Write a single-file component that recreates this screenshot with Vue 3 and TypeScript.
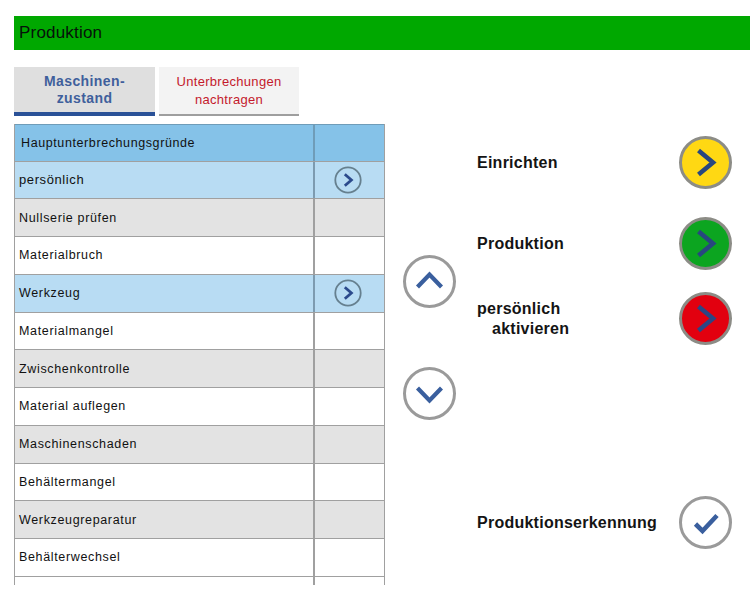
<script setup lang="ts">
interface Row { label: string; tone: 'blue' | 'grey' | 'white'; go?: boolean; big?: boolean }
const rows: Row[] = [
  { label: 'persönlich', tone: 'blue', go: true, big: true },
  { label: 'Nullserie prüfen', tone: 'grey' },
  { label: 'Materialbruch', tone: 'white' },
  { label: 'Werkzeug', tone: 'blue', go: true },
  { label: 'Materialmangel', tone: 'white' },
  { label: 'Zwischenkontrolle', tone: 'grey' },
  { label: 'Material auflegen', tone: 'white' },
  { label: 'Maschinenschaden', tone: 'grey' },
  { label: 'Behältermangel', tone: 'white' },
  { label: 'Werkzeugreparatur', tone: 'grey' },
  { label: 'Behälterwechsel', tone: 'white' },
  { label: '', tone: 'white' },
]
const actions = [
  { label: 'Einrichten', cls: 'yellow', row: 'a1' },
  { label: 'Produktion', cls: 'green', row: 'a2' },
]
</script>

<template>
  <div class="page">
    <header class="bar">Produktion</header>
    <nav class="tabs">
      <div class="tab active">Maschinen-<br />zustand</div>
      <div class="tab other">Unterbrechungen<br />nachtragen</div>
    </nav>
    <main class="main">
      <section class="table">
        <div class="row head">
          <div class="name head-name">Hauptunterbrechungsgründe</div>
          <div class="cell"></div>
        </div>
        <div v-for="(r, i) in rows" :key="i" class="row" :class="r.tone">
          <div class="name" :class="{ big: r.big }">{{ r.label }}</div>
          <div class="cell">
            <svg v-if="r.go" class="mini" viewBox="0 0 28 28">
              <circle cx="14" cy="14" r="12.7" fill="none" stroke="#66808f" stroke-width="1.8" />
              <path d="M10.8 8.2 L17.4 14 L10.8 19.8" fill="none" stroke="#2b4a8c" stroke-width="2.8" />
            </svg>
          </div>
        </div>
      </section>

      <section class="scroll">
        <svg class="round" viewBox="0 0 53 53">
          <circle cx="26.5" cy="26.5" r="25" fill="#fff" stroke="#9a9a9a" stroke-width="3" />
          <path d="M14.5 32 L26.5 19.5 L38.5 32" fill="none" stroke="#3a5f9e" stroke-width="4.2" />
        </svg>
        <svg class="round" viewBox="0 0 53 53">
          <circle cx="26.5" cy="26.5" r="25" fill="#fff" stroke="#9a9a9a" stroke-width="3" />
          <path d="M14.5 21 L26.5 33.5 L38.5 21" fill="none" stroke="#3a5f9e" stroke-width="4.2" />
        </svg>
      </section>

      <section class="actions">
        <div v-for="a in actions" :key="a.label" class="action" :class="a.row">
          <span class="label">{{ a.label }}</span>
          <svg class="round" viewBox="0 0 53 53">
            <circle cx="26.5" cy="26.5" r="25" :class="a.cls" stroke="#8c8c86" stroke-width="3" />
            <path d="M19.5 14.5 L34 26.5 L19.5 38.5" fill="none" stroke="#28477f" stroke-width="4.6" />
          </svg>
        </div>
        <div class="action a3">
          <span class="label">persönlich<br /><span class="indent">aktivieren</span></span>
          <svg class="round" viewBox="0 0 53 53">
            <circle cx="26.5" cy="26.5" r="25" class="red" stroke="#8c8c86" stroke-width="3" />
            <path d="M19.5 14.5 L34 26.5 L19.5 38.5" fill="none" stroke="#2c4684" stroke-width="4.6" />
          </svg>
        </div>
        <div class="action a4">
          <span class="label">Produktionserkennung</span>
          <svg class="round" viewBox="0 0 53 53">
            <circle cx="26.5" cy="26.5" r="25" fill="#fff" stroke="#9a9a9a" stroke-width="3" />
            <path d="M16.5 28 L23.5 35 L38 19.5" fill="none" stroke="#3a5f9e" stroke-width="4.6" />
          </svg>
        </div>
      </section>
    </main>
  </div>
</template>

<style>
html, body { margin: 0; background: #fff; }
</style>

<style scoped>
.page {
  width: 750px;
  height: 600px;
  overflow: hidden;
  box-sizing: border-box;
  padding: 16px 0 0 14px;
  font-family: "Liberation Sans", Arial, sans-serif;
  color: #111;
}
.bar {
  height: 34px;
  line-height: 34px;
  padding-left: 5px;
  background: #00a800;
  font-size: 17px;
  letter-spacing: 0.2px;
  color: #06120a;
}
.tabs {
  display: flex;
  gap: 4px;
  margin-top: 17px;
}
.tab {
  box-sizing: border-box;
  height: 49px;
  text-align: center;
}
.active {
  width: 141px;
  padding-top: 6px;
  background: #dfdfdf;
  border-bottom: 4px solid #2a5197;
  font-size: 14px;
  font-weight: 700;
  line-height: 17px;
  letter-spacing: 0.4px;
  color: #3f5f9c;
}
.other {
  width: 140px;
  padding-top: 6px;
  background: #f3f3f3;
  border-bottom: 2px solid #9e9e9e;
  font-size: 13px;
  line-height: 18px;
  letter-spacing: 0.3px;
  color: #c4192c;
}
.main {
  display: flex;
  margin-top: 8px;
}
.table {
  width: 371px;
  height: 461px;
  overflow: hidden;
  flex: none;
  box-sizing: border-box;
  border-left: 1px solid #a0a0a0;
  border-right: 1px solid #a0a0a0;
}
.row {
  display: grid;
  grid-template-columns: 298px 1fr;
  height: 37.75px;
  box-sizing: border-box;
  border-top: 1px solid #a0a0a0;
}
.head {
  height: 36.5px;
  background: #85c2e8;
  border-top-color: #6f9cb8;
}
.blue { background: #b8dcf3; }
.grey { background: #e3e3e3; }
.white { background: #fff; }
.name {
  display: flex;
  align-items: center;
  padding-left: 4px;
  font-size: 12.5px;
  letter-spacing: 0.65px;
  white-space: nowrap;
}
.big { font-size: 13px; letter-spacing: 0.6px; }
.head-name { padding-left: 6px; letter-spacing: 0.6px; }
.cell {
  display: flex;
  align-items: center;
  justify-content: center;
  padding-right: 3px;
  border-left: 2px solid #a0a0a0;
}
.head .cell { border-left-color: #6f9cb8; }
.blue .cell { border-left-color: #7d9bb0; }
.mini { width: 28px; height: 28px; display: block; }
.scroll {
  width: 53px;
  margin-left: 18px;
  flex: none;
  display: flex;
  flex-direction: column;
  gap: 59px;
  padding-top: 131px;
}
.round { width: 53px; height: 53px; display: block; flex: none; }
.actions {
  width: 255px;
  margin-left: 21px;
  display: flex;
  flex-direction: column;
  padding-top: 12px;
}
.action {
  display: flex;
  align-items: center;
  justify-content: space-between;
}
.a2 { margin-top: 28px; }
.a3 { margin-top: 22px; }
.a4 { margin-top: 151px; }
.label {
  font-size: 16px;
  font-weight: 700;
  line-height: 20px;
  letter-spacing: 0.25px;
  color: #141414;
}
.indent { padding-left: 15px; }
.yellow { fill: #ffd813; }
.green { fill: #0ca520; }
.red { fill: #e2000f; }
</style>
